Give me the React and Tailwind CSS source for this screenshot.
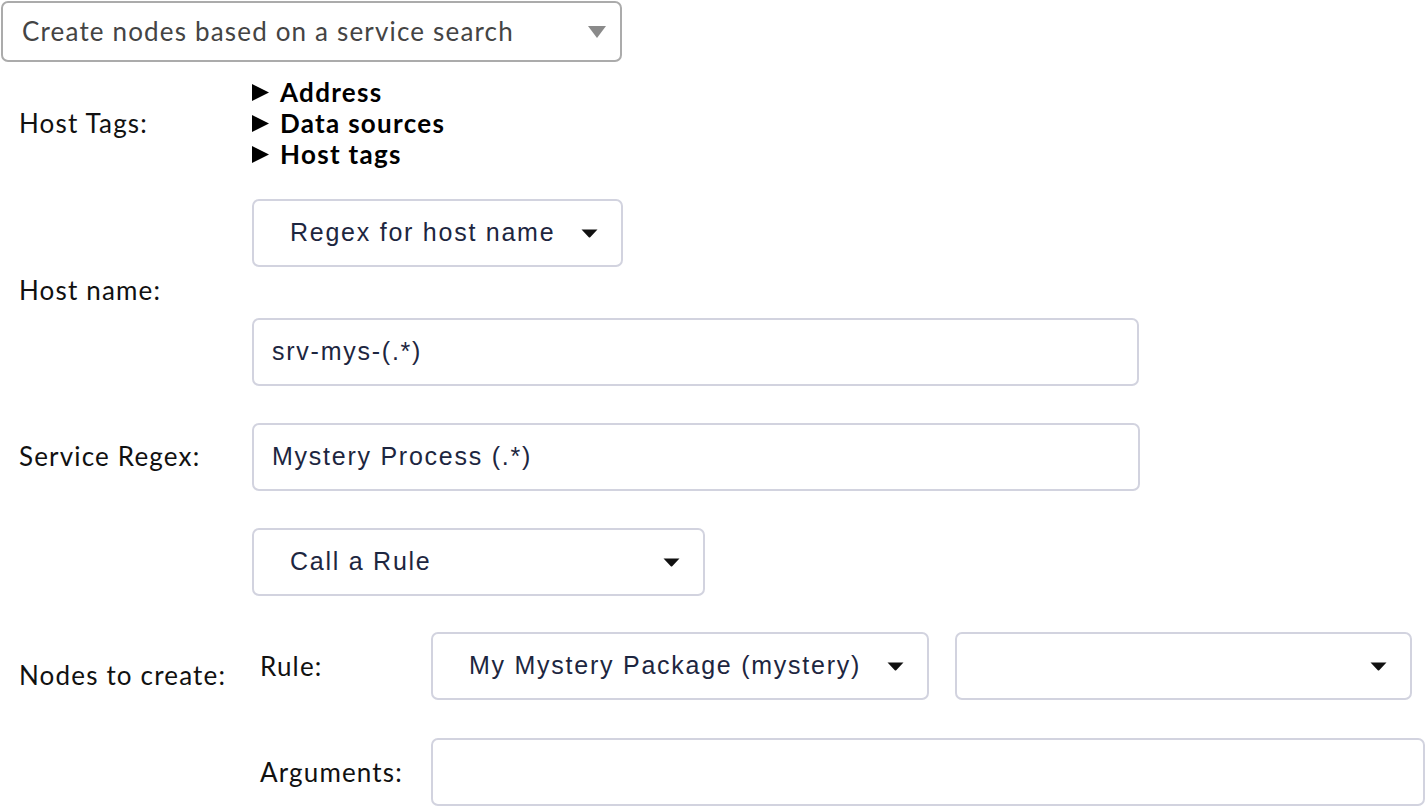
import React from 'react';

const lato = "font-['Lato','Noto_Sans',sans-serif]";
const arial = "font-['Liberation_Sans',Arial,sans-serif]";

// Маленькая чёрная стрелка выпадающего списка
const Caret = ({ className = '' }) => (
    <svg width="17" height="9" viewBox="0 0 17 9" className={className}>
        <path d="M0.5 0.5 H16.5 L9.2 8.2 Q8.5 8.9 7.8 8.2 Z" fill="#111" />
    </svg>
);

const Select = ({ label, className = '' }) => (
    <div
        className={`flex items-center justify-between h-[68px] rounded-[7px] border-2 border-[#d2d3df] bg-white pl-[36px] pr-[23px] ${className}`}
    >
        <span className={`${arial} text-[25px] tracking-[0.07em] text-[#1d2640]`}>{label}</span>
        <Caret />
    </div>
);

const Input = ({ value = '', className = '' }) => (
    <div
        className={`flex items-center h-[68px] rounded-[7px] border-2 border-[#d2d3df] bg-white pl-[18px] ${className}`}
    >
        <span className={`${arial} text-[25px] tracking-[0.07em] text-[#1d2640]`}>{value}</span>
    </div>
);

const Disclosure = ({ children }) => (
    <div className="flex items-center h-[31px] gap-[11px]">
        <svg width="17" height="17" viewBox="0 0 17 17">
            <path d="M0 0 L17 8.5 L0 17 Z" fill="#000" />
        </svg>
        <span className={`${lato} font-bold text-[26px] leading-[31px] tracking-[0.05em] text-black`}>{children}</span>
    </div>
);

const Label = ({ children, className = '' }) => (
    <div className={`${lato} text-[26px] leading-[31px] tracking-[0.045em] text-[#111] self-center ${className}`}>{children}</div>
);

export default function App() {
    return (
        <div className="w-[1426px] h-[807px] overflow-hidden bg-white">
            {/* Верхний селектор */}
            <div className="ml-[1px] mt-[1px] w-[621px] h-[61px] flex items-center justify-between rounded-[7px] border-2 border-[#ababab] pl-[19px] pr-[14px]">
                <span className={`${lato} text-[26px] tracking-[0.045em] text-[#444]`}>
                    Create nodes based on a service search
                </span>
                <svg width="18" height="12" viewBox="0 0 18 12">
                    <path d="M0 0 H18 L9 12 Z" fill="#8a8a8a" />
                </svg>
            </div>

            <div className="grid grid-cols-[252px_1fr]">
                {/* Host Tags */}
                <Label className="pl-[19px] mt-[15px]">Host Tags:</Label>
                <div className="mt-[15px] flex flex-col">
                    <Disclosure>Address</Disclosure>
                    <Disclosure>Data sources</Disclosure>
                    <Disclosure>Host tags</Disclosure>
                </div>

                {/* Host name */}
                <Label className="pl-[19px] mt-[29px] mb-[4px]">Host name:</Label>
                <div className="mt-[29px] flex flex-col gap-[51px]">
                    <Select label="Regex for host name" className="w-[371px]" />
                    <Input value="srv-mys-(.*)" className="w-[887px]" />
                </div>

                {/* Service Regex */}
                <Label className="pl-[19px] mt-[37px] mb-[2px]">Service Regex:</Label>
                <div className="mt-[37px]">
                    <Input value="Mystery Process (.*)" className="w-[888px]" />
                </div>

                {/* Nodes to create */}
                <Label className="pl-[19px] mt-[53px]">Nodes to create:</Label>
                <div className="mt-[37px] flex flex-col">
                    <Select label="Call a Rule" className="w-[453px]" />
                    <div className="mt-[36px] grid grid-cols-[179px_1fr] gap-y-[38px]">
                        <Label className="pl-[8px]">Rule:</Label>
                        <div className="flex gap-[26px]">
                            <Select label="My Mystery Package (mystery)" className="w-[498px]" />
                            <Select label="" className="w-[457px]" />
                        </div>
                        <Label className="pl-[8px]">Arguments:</Label>
                        <Input className="w-[994px]" />
                    </div>
                </div>
            </div>
        </div>
    );
}
